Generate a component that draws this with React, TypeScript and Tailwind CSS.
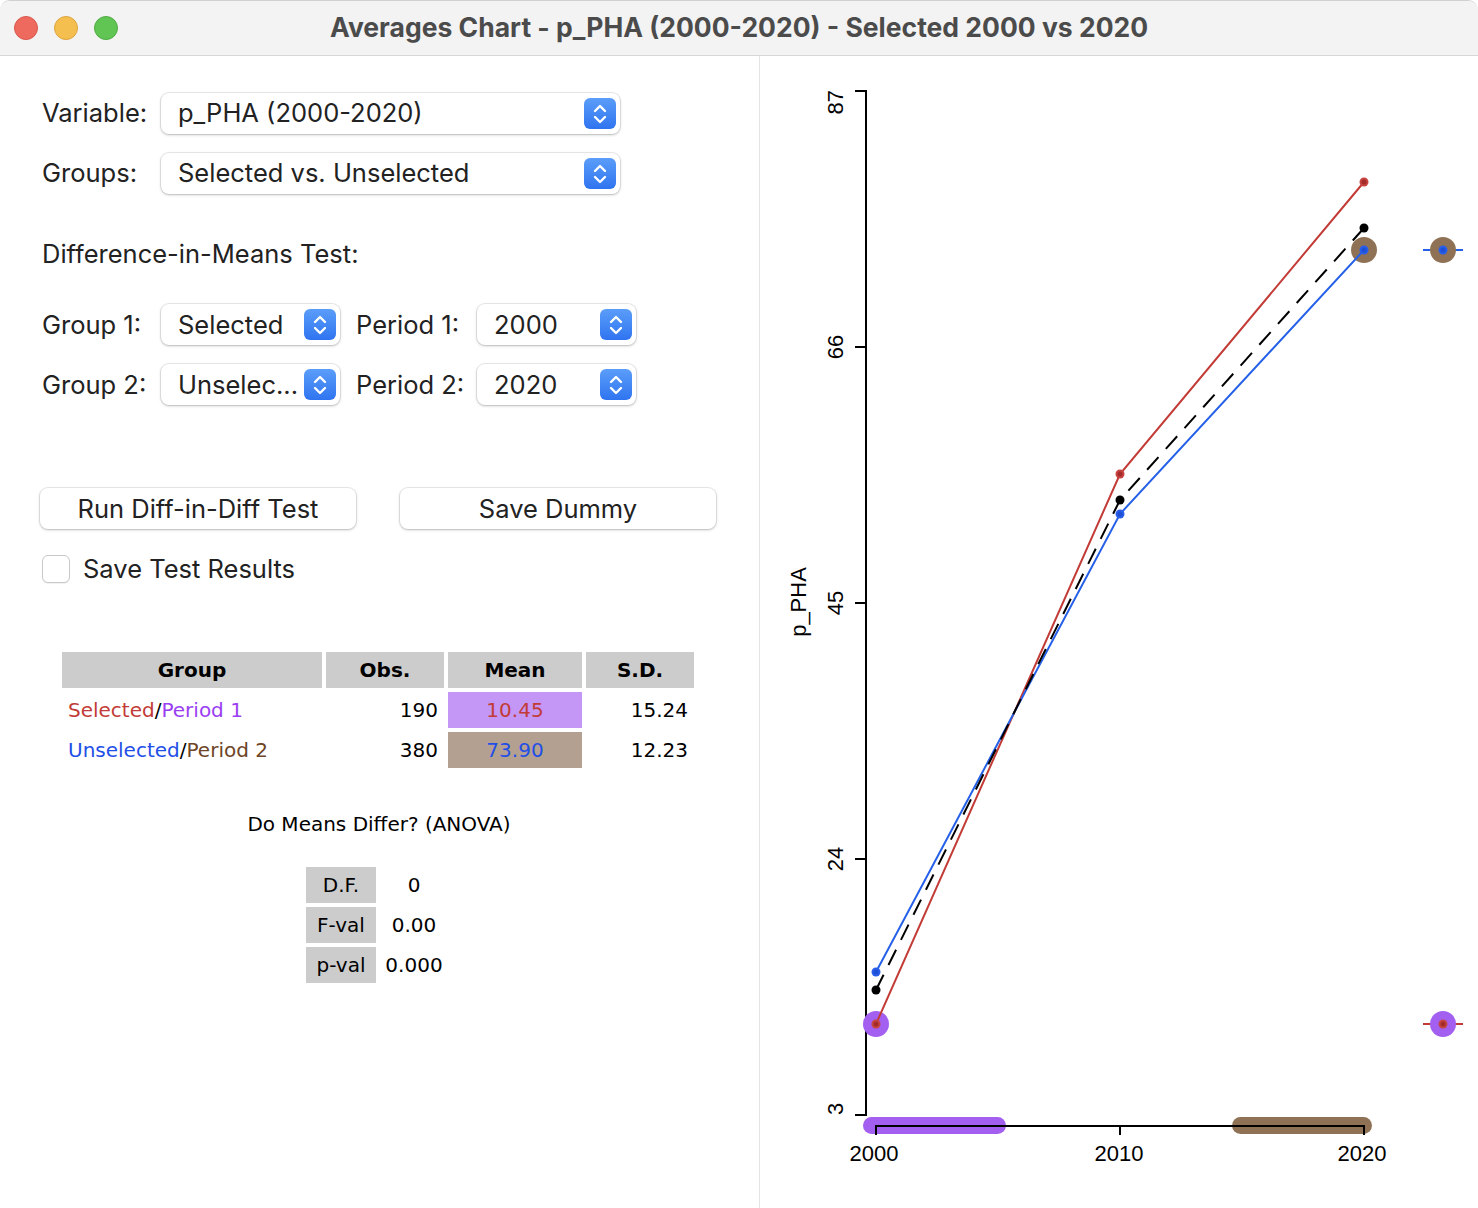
import React from "react";

const ui = { fontFamily: "Inter, 'Noto Sans', sans-serif" };
const verdana = { fontFamily: "'DejaVu Sans', Verdana, sans-serif" };
const helv = "'Liberation Sans', Arial, sans-serif";

const Chevrons = () => (
  <svg width="16" height="26" viewBox="0 0 16 26" fill="none">
    <path d="M3 10 L8 5 L13 10" stroke="white" strokeWidth="2.4" strokeLinecap="round" strokeLinejoin="round" />
    <path d="M3 16 L8 21 L13 16" stroke="white" strokeWidth="2.4" strokeLinecap="round" strokeLinejoin="round" />
  </svg>
);

const Select = ({ value, width }: { value: string; width: string }) => (
  <div
    className={`${width} relative flex h-[41px] shrink-0 items-center rounded-[8px] bg-white pl-[17px] text-[25.5px] text-[#222] shadow-[0_0_0_1px_rgba(0,0,0,0.08),0_1px_3px_rgba(0,0,0,0.22)]`}
  >
    <span className="whitespace-nowrap">{value}</span>
    <div className="absolute right-[4px] top-[5px] flex h-[31px] w-[32px] items-center justify-center rounded-[6px] bg-gradient-to-b from-[#5b9df9] to-[#2f74f0]">
      <Chevrons />
    </div>
  </div>
);

const Label = ({ children, width }: { children: React.ReactNode; width: string }) => (
  <div className={`${width} shrink-0 text-[25.5px] text-[#222]`}>{children}</div>
);

const Button = ({ children }: { children: React.ReactNode }) => (
  <button className="flex h-[41px] w-[316px] items-center justify-center rounded-[8px] bg-white text-[25.5px] text-[#222] shadow-[0_0_0_1px_rgba(0,0,0,0.08),0_1px_3px_rgba(0,0,0,0.22)]">
    {children}
  </button>
);

const Chart = () => {
  const xs = [876, 1120, 1364];
  const red = [1024, 474, 182];
  const blue = [972, 514, 250];
  const black = [990, 500, 228];
  const pts = (ys: number[]) => ys.map((y, i) => `${xs[i]},${y}`).join(" ");
  const ticks = [
    { y: 91, v: "87", anchor: "end", at: 90 },
    { y: 347, v: "66", anchor: "middle", at: 347 },
    { y: 603, v: "45", anchor: "middle", at: 603 },
    { y: 859, v: "24", anchor: "middle", at: 859 },
    { y: 1115, v: "3", anchor: "start", at: 1115 },
  ];
  return (
    <svg width="718" height="1152" viewBox="760 56 718 1152" className="block" style={{ fontFamily: helv }}>
      {/* y axis */}
      <line x1="866" y1="90" x2="866" y2="1116" stroke="#000" strokeWidth="2" />
      {ticks.map((t) => (
        <g key={t.v}>
          <line x1="855" y1={t.y} x2="866" y2={t.y} stroke="#000" strokeWidth="2" />
          <text
            x="843"
            y={t.at}
            fontSize="22"
            textAnchor={t.anchor}
            transform={`rotate(-90 843 ${t.at})`}
          >
            {t.v}
          </text>
        </g>
      ))}
      <text x="806" y="602" fontSize="22" textAnchor="middle" transform="rotate(-90 806 602)">
        p_PHA
      </text>

      {/* period bars + x axis */}
      <rect x="863" y="1117" width="143" height="17" rx="8.5" fill="#a35ff0" />
      <rect x="1232" y="1117" width="140" height="17" rx="8.5" fill="#8f7155" />
      <line x1="875" y1="1126" x2="1365" y2="1126" stroke="#000" strokeWidth="2" />
      {xs.map((x) => (
        <line key={x} x1={x} y1="1125" x2={x} y2="1135" stroke="#000" strokeWidth="2" />
      ))}
      {["2000", "2010", "2020"].map((l, i) => (
        <text key={l} x={[874, 1119, 1362][i]} y="1161" fontSize="22" textAnchor="middle">
          {l}
        </text>
      ))}

      {/* highlight circles */}
      <circle cx="876" cy="1024" r="13" fill="#a35ff0" />
      <circle cx="1364" cy="250" r="13" fill="#8f7155" />

      {/* lines */}
      <polyline points={pts(red)} fill="none" stroke="#c23b36" strokeWidth="2" />
      <polyline points={pts(blue)} fill="none" stroke="#2560e8" strokeWidth="2" />
      <polyline points={pts(black)} fill="none" stroke="#000" strokeWidth="2" strokeDasharray="17 11" />

      {xs.map((x, i) => (
        <g key={x}>
          <circle cx={x} cy={blue[i]} r="4.5" fill="#2a5ee8" />
          <circle cx={x} cy={blue[i]} r="2.5" fill="#1d4fd6" />
          <circle cx={x} cy={black[i]} r="4.5" fill="#000" />
          <circle cx={x} cy={red[i]} r="4.5" fill="#c64440" />
          <circle cx={x} cy={red[i]} r="2.5" fill="#a52a2a" />
        </g>
      ))}

      {/* markers at right */}
      <line x1="1423" y1="250" x2="1463" y2="250" stroke="#2560e8" strokeWidth="2" />
      <circle cx="1443" cy="250" r="13" fill="#8f7155" />
      <circle cx="1443" cy="250" r="4.5" fill="#2a5ee8" />
      <circle cx="1443" cy="250" r="2.5" fill="#1d4fd6" />
      <line x1="1423" y1="1024" x2="1463" y2="1024" stroke="#c23b36" strokeWidth="2" />
      <circle cx="1443" cy="1024" r="13" fill="#a35ff0" />
      <circle cx="1443" cy="1024" r="4.5" fill="#c64440" />
      <circle cx="1443" cy="1024" r="2.5" fill="#a52a2a" />
    </svg>
  );
};

export default function App() {
  const headCell = "flex h-[36px] items-center justify-center bg-[#cccccc] font-bold";
  return (
    <div className="h-[1208px] w-[1478px] overflow-hidden bg-white" style={ui}>
      <div className="flex h-full flex-col overflow-hidden rounded-t-[10px] border-t border-[#d0d0d0]">
        {/* title bar */}
        <div className="relative flex h-[55px] shrink-0 items-center justify-center border-b border-[#d6d6d6] bg-[#f3f3f3]">
          <div className="absolute left-[14px] top-[15px] flex gap-[16px]">
            <span className="h-[24px] w-[24px] rounded-full border border-[#d9584d] bg-[#ee6a5f]" />
            <span className="h-[24px] w-[24px] rounded-full border border-[#dca43e] bg-[#f5bf4f]" />
            <span className="h-[24px] w-[24px] rounded-full border border-[#4faa42] bg-[#61c554]" />
          </div>
          <div className="text-[26.5px] font-bold text-[#4b4b4b]">
            Averages Chart - p_PHA (2000-2020) - Selected 2000 vs 2020
          </div>
        </div>

        <div className="flex flex-1">
          {/* left panel */}
          <div className="w-[760px] shrink-0 border-r border-[#e3e3e3] pl-[42px] pt-[37px]">
            <div className="flex items-center">
              <Label width="w-[119px]">Variable:</Label>
              <Select value="p_PHA (2000-2020)" width="w-[459px]" />
            </div>
            <div className="mt-[19px] flex items-center">
              <Label width="w-[119px]">Groups:</Label>
              <Select value="Selected vs. Unselected" width="w-[459px]" />
            </div>

            <div className="mt-[41px] text-[25.5px] text-[#222]">Difference-in-Means Test:</div>

            <div className="mt-[31px] flex items-center">
              <Label width="w-[119px]">Group 1:</Label>
              <Select value="Selected" width="w-[179px]" />
              <Label width="w-[137px] pl-[16px]">Period 1:</Label>
              <Select value="2000" width="w-[159px]" />
            </div>
            <div className="mt-[19px] flex items-center">
              <Label width="w-[119px]">Group 2:</Label>
              <Select value="Unselec..." width="w-[179px]" />
              <Label width="w-[137px] pl-[16px]">Period 2:</Label>
              <Select value="2020" width="w-[159px]" />
            </div>

            <div className="-ml-[2px] mt-[83px] flex gap-[44px]">
              <Button>Run Diff-in-Diff Test</Button>
              <Button>Save Dummy</Button>
            </div>

            <div className="mt-[21px] flex items-center gap-[13px]">
              <span className="h-[28px] w-[28px] rounded-[6px] border border-[#c9c9c9] bg-white shadow-[0_1px_1px_rgba(0,0,0,0.06)]" />
              <span className="text-[25.5px] text-[#222]">Save Test Results</span>
            </div>

            {/* stats table */}
            <div className="ml-[20px] mt-[63px] text-[20px] text-black" style={verdana}>
              <div className="grid grid-cols-[260px_118px_134px_108px] gap-x-[4px] gap-y-[4px]">
                <div className={headCell}>Group</div>
                <div className={headCell}>Obs.</div>
                <div className={headCell}>Mean</div>
                <div className={headCell}>S.D.</div>

                <div className="flex h-[36px] items-center pl-[6px]">
                  <span className="text-[#c23b36]">Selected</span>/<span className="text-[#9a3ef2]">Period 1</span>
                </div>
                <div className="flex h-[36px] items-center justify-end pr-[6px]">190</div>
                <div className="flex h-[36px] items-center justify-center bg-[#c496f5] text-[#c23b36]">10.45</div>
                <div className="flex h-[36px] items-center justify-end pr-[6px]">15.24</div>

                <div className="flex h-[36px] items-center pl-[6px]">
                  <span className="text-[#1f4fe6]">Unselected</span>/<span className="text-[#6e4526]">Period 2</span>
                </div>
                <div className="flex h-[36px] items-center justify-end pr-[6px]">380</div>
                <div className="flex h-[36px] items-center justify-center bg-[#b4a090] text-[#1f4fe6]">73.90</div>
                <div className="flex h-[36px] items-center justify-end pr-[6px]">12.23</div>
              </div>

              <div className="-ml-[62px] mt-[41px] w-[758px] text-center">Do Means Differ? (ANOVA)</div>

              <div className="ml-[244px] mt-[28px] grid grid-cols-[70px_76px] gap-y-[4px]">
                <div className="flex h-[36px] items-center justify-center bg-[#cccccc]">D.F.</div>
                <div className="flex h-[36px] items-center justify-center">0</div>
                <div className="flex h-[36px] items-center justify-center bg-[#cccccc]">F-val</div>
                <div className="flex h-[36px] items-center justify-center">0.00</div>
                <div className="flex h-[36px] items-center justify-center bg-[#cccccc]">p-val</div>
                <div className="flex h-[36px] items-center justify-center">0.000</div>
              </div>
            </div>
          </div>

          {/* chart panel */}
          <div className="flex-1">
            <Chart />
          </div>
        </div>
      </div>
    </div>
  );
}
